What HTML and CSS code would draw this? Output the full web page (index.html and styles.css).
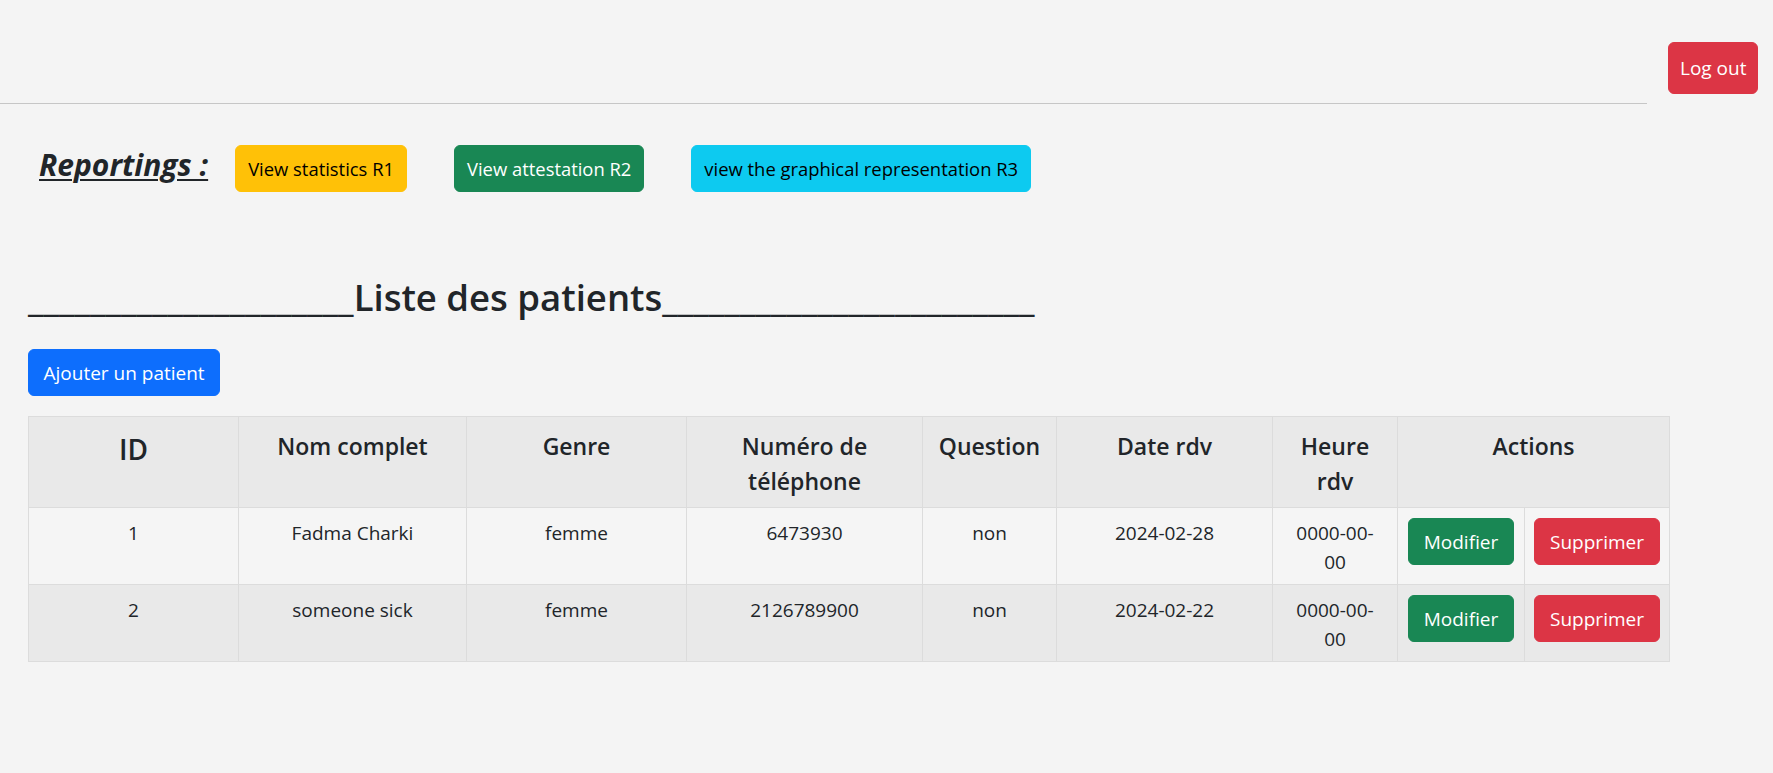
FILE: index.html
```html
<!DOCTYPE html>
<html lang="fr">
<head>
<meta charset="utf-8">
<title>Liste des patients</title>
<link rel="stylesheet" href="styles.css">
</head>
<body>
<header class="topbar">
  <div class="topbar-rule"></div>
  <a class="btn btn-danger logout" href="#">Log out</a>
</header>
<main class="content">
  <section class="reportings">
    <h4 class="reportings-title">Reportings :</h4>
    <div class="report-links">
      <a class="btn btn-warning" href="#">View statistics R1</a>
      <a class="btn btn-success" href="#">View attestation R2</a>
      <a class="btn btn-info" href="#">view the graphical representation R3</a>
    </div>
  </section>

  <h2 class="list-title"><span class="rule-left">_____________________</span>Liste des patients<span class="rule-right">________________________</span></h2>

  <a class="btn btn-primary add-btn" href="#">Ajouter un patient</a>

  <table class="patients">
    <colgroup>
      <col class="c-id"><col class="c-nom"><col class="c-genre"><col class="c-tel"><col class="c-q"><col class="c-date"><col class="c-heure"><col class="c-mod"><col class="c-sup">
    </colgroup>
    <thead>
      <tr>
        <th class="th-id">ID</th>
        <th>Nom complet</th>
        <th>Genre</th>
        <th>Numéro de téléphone</th>
        <th>Question</th>
        <th>Date rdv</th>
        <th class="narrow">Heure rdv</th>
        <th colspan="2">Actions</th>
      </tr>
    </thead>
    <tbody>
      <tr>
        <td>1</td>
        <td>Fadma Charki</td>
        <td>femme</td>
        <td>6473930</td>
        <td>non</td>
        <td>2024-02-28</td>
        <td class="narrow">0000-00-00</td>
        <td class="action"><a class="btn btn-success" href="#">Modifier</a></td>
        <td class="action"><a class="btn btn-danger" href="#">Supprimer</a></td>
      </tr>
      <tr>
        <td>2</td>
        <td>someone sick</td>
        <td>femme</td>
        <td>2126789900</td>
        <td>non</td>
        <td>2024-02-22</td>
        <td class="narrow">0000-00-00</td>
        <td class="action"><a class="btn btn-success" href="#">Modifier</a></td>
        <td class="action"><a class="btn btn-danger" href="#">Supprimer</a></td>
      </tr>
    </tbody>
  </table>
</main>
</body>
</html>
```

FILE: styles.css
```css
* { box-sizing: border-box; }

body {
  margin: 0;
  background: #f4f4f4;
  color: #212529;
  font-family: "Open Sans", "Noto Sans", "DejaVu Sans", sans-serif;
  font-size: 19px;
  line-height: 1.5;
}

.btn {
  display: inline-block;
  padding: 7.5px 12px;
  font-size: 19px;
  line-height: 30px;
  border: 1px solid transparent;
  border-radius: 6px;
  text-decoration: none;
  text-align: center;
  white-space: nowrap;
}
.btn-danger  { background: #dc3545; border-color: #dc3545; color: #fff; }
.btn-success { background: #198754; border-color: #198754; color: #fff; }
.btn-warning { background: #ffc107; border-color: #ffc107; color: #000; }
.btn-info    { background: #0dcaf0; border-color: #0dcaf0; color: #000; }
.btn-primary { background: #0d6efd; border-color: #0d6efd; color: #fff; }

/* top bar */
.topbar {
  display: flex;
  align-items: flex-start;
}
.topbar-rule {
  flex: none;
  width: 1647px;
  height: 104px;
  border-bottom: 1px solid #c6c6c6;
}
.logout {
  margin-left: 21px;
  margin-top: 42px;
  padding: 10px 11px;
}

/* content */
.content {
  padding-left: 28px;
}

.reportings {
  display: flex;
  align-items: center;
  gap: 27px;
  margin-top: 41px;
  padding-left: 11px;
}
.reportings-title {
  margin: 0 0 8px;
  font-size: 30px;
  line-height: 36px;
  font-style: italic;
  font-weight: 700;
  text-decoration: underline;
  text-decoration-thickness: 2px;
  text-underline-offset: 3px;
}
.report-links {
  display: flex;
  gap: 47px;
}
.report-links .btn {
  font-size: 18.4px;
}

.list-title {
  margin: 81px 0 28px;
  font-size: 36.5px;
  line-height: 48px;
  font-weight: 600;
  white-space: nowrap;
}

.add-btn {
  padding-left: 14.5px;
  padding-right: 14.5px;
}

/* table */
.patients {
  margin-top: 20px;
  width: 1641px;
  border-collapse: collapse;
  table-layout: fixed;
}
.c-id    { width: 210px; }
.c-nom   { width: 228px; }
.c-genre { width: 220px; }
.c-tel   { width: 236px; }
.c-q     { width: 134px; }
.c-date  { width: 216px; }
.c-heure { width: 125px; }
.c-mod   { width: 127px; }
.c-sup   { width: 145px; }

.patients th,
.patients td {
  border: 1px solid #dcdcdc;
  text-align: center;
  vertical-align: top;
}
.patients th {
  background: #e9e9e9;
  padding: 12px 8px 8px;
  font-size: 23px;
  line-height: 35px;
  font-weight: 600;
}
.patients th.th-id {
  font-size: 28px;
  line-height: 40px;
}
.patients td {
  padding: 11px 10px 8px;
  font-size: 19px;
  line-height: 28.5px;
}
.patients td.narrow { padding-left: 14px; padding-right: 14px; }
.patients th.narrow { padding-left: 12px; padding-right: 12px; }
.patients td.action { padding: 10px 6px 8px; }
.patients td.action .btn { padding-left: 15px; padding-right: 15px; }
.patients tbody tr:nth-child(odd) td { background: #f5f5f5; }
.patients tbody tr:nth-child(even) td { background: #e9e9e9; }
```
